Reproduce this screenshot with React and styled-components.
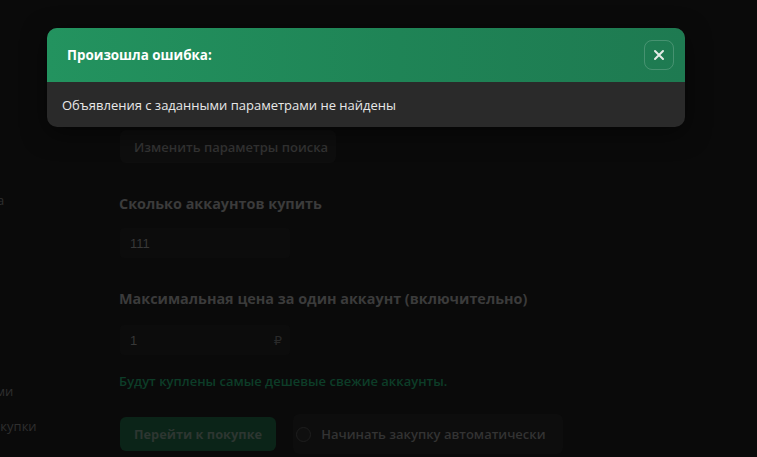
import styled, { createGlobalStyle } from "styled-components";

const GlobalStyle = createGlobalStyle`
  html, body {
    margin: 0;
    padding: 0;
    background: #0a0a0a;
    font-family: "Open Sans", "Noto Sans", sans-serif;
    overflow: hidden;
  }
`;

const sideItems = [
  { text: "Массовая закупка", top: 191, offset: -109 },
  { text: "Управление закупками", top: 173, offset: -134 },
  { text: "История закупки", top: 17, offset: -70 },
  { text: "Баланс: 111 ₽", top: 20, offset: -2 },
];

const App = () => {
  return (
    <>
      <GlobalStyle />
      <Page>
        <Sidebar>
          {sideItems.map((item) => (
            <SideItem key={item.text} $top={item.top} $offset={item.offset}>
              {item.text}
            </SideItem>
          ))}
        </Sidebar>
        <Main>
          <GhostButton>Изменить параметры поиска</GhostButton>
          <Label>Сколько аккаунтов купить</Label>
          <Input $gap={13}>111</Input>
          <Label>Максимальная цена за один аккаунт (включительно)</Label>
          <Input $gap={15}>
            1<Currency>₽</Currency>
          </Input>
          <Hint>Будут куплены самые дешевые свежие аккаунты.</Hint>
          <Actions>
            <BuyButton>Перейти к покупке</BuyButton>
            <AutoBox>
              <Radio />
              Начинать закупку автоматически
            </AutoBox>
          </Actions>
        </Main>
      </Page>

      <Modal>
        <ModalHeader>
          <Title>Произошла ошибка:</Title>
          <CloseButton>
            <svg width="12" height="12" viewBox="0 0 12 12">
              <path
                d="M2 2 L10 10 M10 2 L2 10"
                stroke="#e4ece7"
                strokeWidth="2"
                strokeLinecap="round"
              />
            </svg>
          </CloseButton>
        </ModalHeader>
        <ModalBody>Объявления с заданными параметрами не найдены</ModalBody>
      </Modal>
    </>
  );
};

const Page = styled.div`
  display: flex;
  width: 757px;
  height: 457px;
  overflow: hidden;
  background: #0a0a0a;
`;

const Sidebar = styled.nav`
  width: 119px;
  flex-shrink: 0;
  overflow: hidden;
  display: flex;
  flex-direction: column;
`;

const SideItem = styled.div`
  margin-top: ${(p) => p.$top}px;
  margin-left: ${(p) => p.$offset}px;
  white-space: nowrap;
  font-size: 13px;
  line-height: 18px;
  color: #2f2f2f;
`;

const Main = styled.main`
  display: flex;
  flex-direction: column;
  align-items: flex-start;
  padding-top: 130px;
`;

const GhostButton = styled.div`
  display: flex;
  align-items: center;
  height: 33px;
  padding: 0 8px 0 14px;
  margin-left: 1px;
  background: #0e0e0e;
  border-radius: 6px;
  font-size: 13px;
  font-weight: 600;
  color: #333333;
`;

const Label = styled.div`
  margin-top: 30px;
  font-size: 14.4px;
  font-weight: 700;
  line-height: 22px;
  color: #3b3b3b;
`;

const Input = styled.div`
  display: flex;
  align-items: center;
  justify-content: space-between;
  box-sizing: border-box;
  width: 170px;
  height: 30px;
  margin-top: ${(p) => p.$gap}px;
  padding: 0 8px 0 10px;
  margin-left: 1px;
  background: #0c0c0c;
  border-radius: 4px;
  font-family: "Liberation Sans", Arial, sans-serif;
  font-size: 13px;
  color: #383838;
`;

const Currency = styled.span`
  font-family: "DejaVu Sans", sans-serif;
  font-size: 13px;
  color: #2a2a2a;
`;

const Hint = styled.div`
  margin-top: 17px;
  font-size: 13px;
  line-height: 18px;
  font-weight: 600;
  color: #0d3d28;
`;

const Actions = styled.div`
  display: flex;
  align-items: center;
  gap: 17px;
  margin-top: 24px;
`;

const BuyButton = styled.div`
  display: flex;
  align-items: center;
  height: 34px;
  padding: 0 14px;
  margin-left: 1px;
  background: #0b2418;
  border-radius: 6px;
  font-size: 12.8px;
  font-weight: 700;
  color: #2d3631;
`;

const AutoBox = styled.div`
  display: flex;
  align-items: center;
  gap: 10px;
  height: 40px;
  padding: 0 17px 0 3px;
  background: #0d0d0d;
  border-radius: 6px;
  font-size: 13px;
  font-weight: 600;
  color: #333333;
`;

const Radio = styled.span`
  width: 13px;
  height: 13px;
  border-radius: 50%;
  border: 1px solid #1e1e1e;
  background: #0f0f0f;
`;

const Modal = styled.div`
  position: absolute;
  left: 47px;
  top: 28px;
  width: 638px;
  border-radius: 10px;
  overflow: hidden;
  background: #2a2a2a;
  box-shadow: 0 6px 24px rgba(0, 0, 0, 0.5);
`;

const ModalHeader = styled.div`
  display: flex;
  align-items: center;
  justify-content: space-between;
  height: 54px;
  padding: 0 11px 0 20px;
  background: linear-gradient(90deg, #23935f 0%, #1f8456 55%, #1e7a51 100%);
`;

const Title = styled.div`
  font-size: 13.4px;
  font-weight: 700;
  color: #ffffff;
`;

const CloseButton = styled.div`
  display: flex;
  align-items: center;
  justify-content: center;
  box-sizing: border-box;
  width: 30px;
  height: 30px;
  border-radius: 8px;
  border: 1px solid rgba(255, 255, 255, 0.18);
`;

const ModalBody = styled.div`
  display: flex;
  align-items: center;
  height: 45px;
  padding: 0 15px;
  font-size: 13px;
  color: #e8e8e8;
`;

export default App;
